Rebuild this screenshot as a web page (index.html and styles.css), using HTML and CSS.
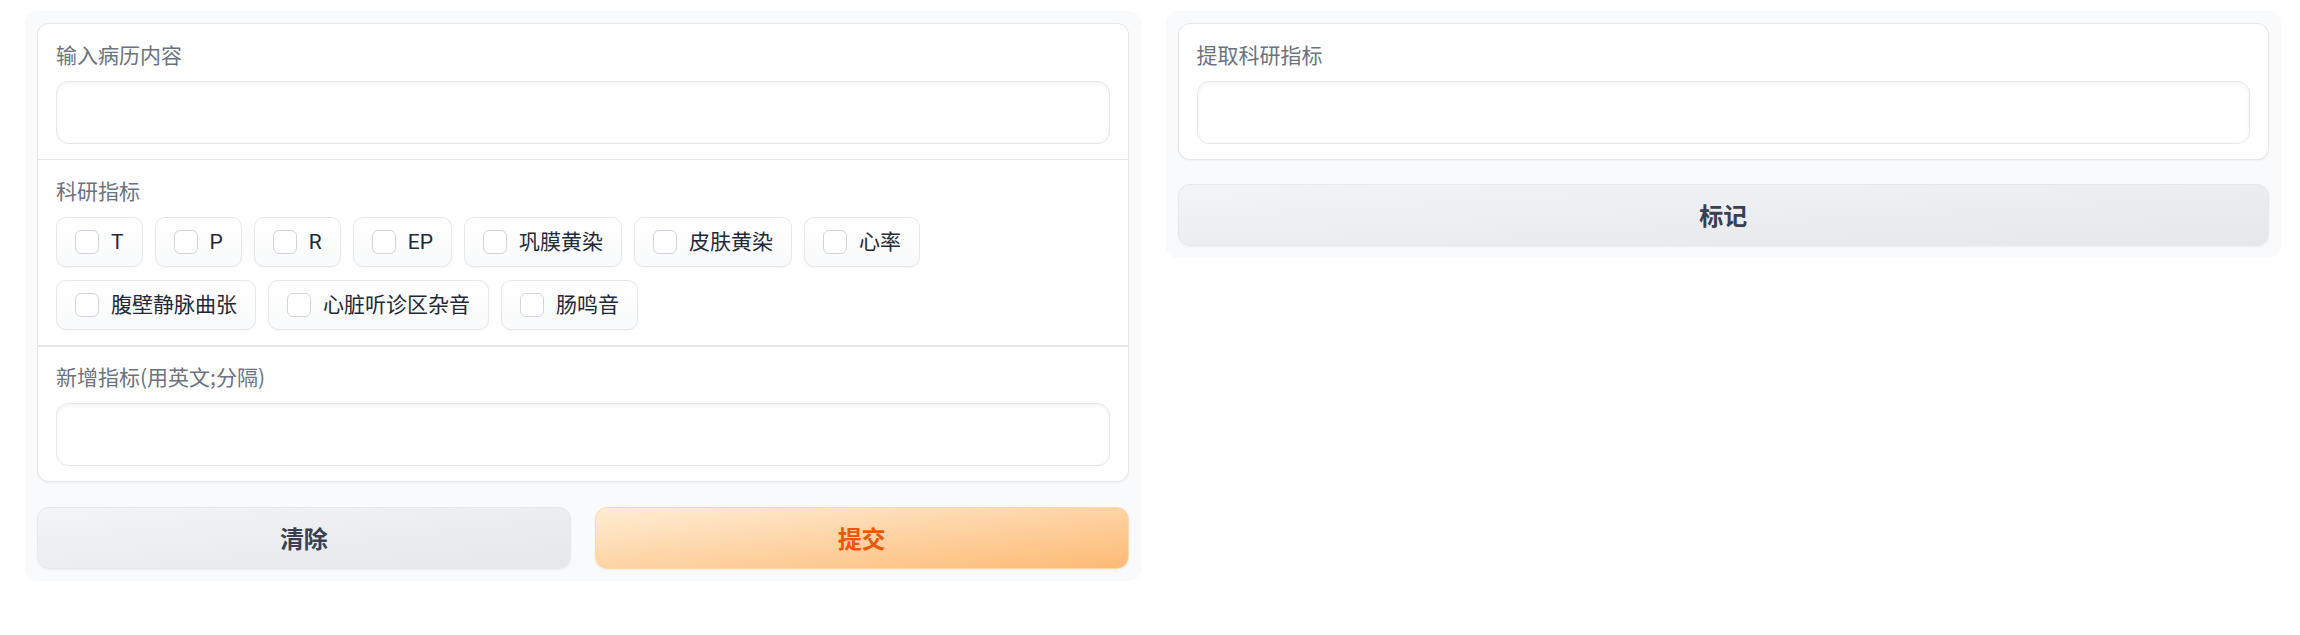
FILE: index.html
```html
<!DOCTYPE html>
<html lang="zh">
<head>
<meta charset="utf-8">
<title>科研指标提取</title>
<link rel="stylesheet" href="styles.css">
</head>
<body>
<div class="app">
  <div class="panel">
    <div class="form">
      <div class="block">
        <span class="label">输入病历内容</span>
        <textarea class="input" rows="1"></textarea>
      </div>
      <div class="block">
        <span class="label">科研指标</span>
        <div class="checks">
          <label class="check"><span class="box"></span><span>T</span></label>
          <label class="check"><span class="box"></span><span>P</span></label>
          <label class="check"><span class="box"></span><span>R</span></label>
          <label class="check"><span class="box"></span><span>EP</span></label>
          <label class="check"><span class="box"></span><span>巩膜黄染</span></label>
          <label class="check"><span class="box"></span><span>皮肤黄染</span></label>
          <label class="check"><span class="box"></span><span>心率</span></label>
          <label class="check"><span class="box"></span><span>腹壁静脉曲张</span></label>
          <label class="check"><span class="box"></span><span>心脏听诊区杂音</span></label>
          <label class="check"><span class="box"></span><span>肠鸣音</span></label>
        </div>
      </div>
      <div class="block">
        <span class="label">新增指标(用英文;分隔)</span>
        <textarea class="input" rows="1"></textarea>
      </div>
    </div>
    <div class="buttons">
      <button class="btn secondary">清除</button>
      <button class="btn primary">提交</button>
    </div>
  </div>
  <div class="panel">
    <div class="form">
      <div class="block">
        <span class="label">提取科研指标</span>
        <textarea class="input" rows="1"></textarea>
      </div>
    </div>
    <button class="btn secondary">标记</button>
  </div>
</div>
</body>
</html>
```
FILE: styles.css
```css
* { box-sizing: border-box; }
html, body { margin: 0; padding: 0; background: #ffffff; }
body {
  font-family: "Roboto", "Noto Sans CJK SC", sans-serif;
  color: #1f2937;
}
.app {
  display: flex;
  align-items: flex-start;
  gap: 25px;
  padding: 11px 19px 0 25px;
}
.panel {
  flex: 1 1 0;
  min-width: 0;
  background: #f9fafb;
  border-radius: 12px;
  padding: 12px;
  display: flex;
  flex-direction: column;
  gap: 24.5px;
}
.form {
  display: flex;
  flex-direction: column;
  gap: 1.5px;
  background: #e5e7eb;
  border: 1px solid #e5e7eb;
  border-radius: 12px;
  overflow: hidden;
  box-shadow: 0 1px 2px rgba(0,0,0,0.04);
}
.block {
  background: #ffffff;
  padding: 14.5px 18px 15px;
  display: flex;
  flex-direction: column;
}
.label {
  display: block;
  font-family: "Noto Sans CJK SC", sans-serif;
  font-size: 21px;
  line-height: 30px;
  color: #6b7280;
  margin-bottom: 12px;
}
.input {
  display: block;
  width: 100%;
  height: 63px;
  resize: none;
  border: 1px solid #e5e7eb;
  border-radius: 12px;
  background: #ffffff;
  box-shadow: inset 0 2px 4px rgba(0,0,0,0.05);
  padding: 15px 18px;
  font-family: inherit;
  font-size: 21px;
  line-height: 31px;
  outline: none;
}
.checks {
  display: flex;
  flex-wrap: wrap;
  row-gap: 13.5px;
  column-gap: 12px;
}
.check {
  display: flex;
  align-items: center;
  height: 50px;
  padding: 0 18px;
  border: 1px solid #e5e7eb;
  border-radius: 10px;
  background: linear-gradient(to top, #f9fafb, #ffffff);
  box-shadow: 0 1px 2px rgba(0,0,0,0.04);
  font-size: 21px;
  line-height: 30px;
  color: #1f2937;
}
.box {
  width: 24px;
  height: 24px;
  border: 1px solid #d1d5db;
  border-radius: 6px;
  background: #ffffff;
  margin-right: 12px;
  flex: none;
}
.buttons {
  display: grid;
  grid-template-columns: 1fr 1fr;
  gap: 24px;
}
.btn {
  display: block;
  width: 100%;
  height: 62px;
  border-radius: 12px;
  font-family: "Noto Sans CJK SC", sans-serif;
  font-size: 24px;
  font-weight: 700;
  line-height: 36px;
  padding: 0 18px;
  cursor: pointer;
  box-shadow: 0 1px 2px rgba(0,0,0,0.05);
}
.secondary {
  border: 1px solid #e5e7eb;
  background: linear-gradient(to bottom right, #f3f4f6, #e5e7eb);
  color: #374151;
}
.primary {
  border: 1px solid #fed7aa;
  background: linear-gradient(to bottom right, #ffedd5, #fdba74);
  color: #ea580c;
}
```
